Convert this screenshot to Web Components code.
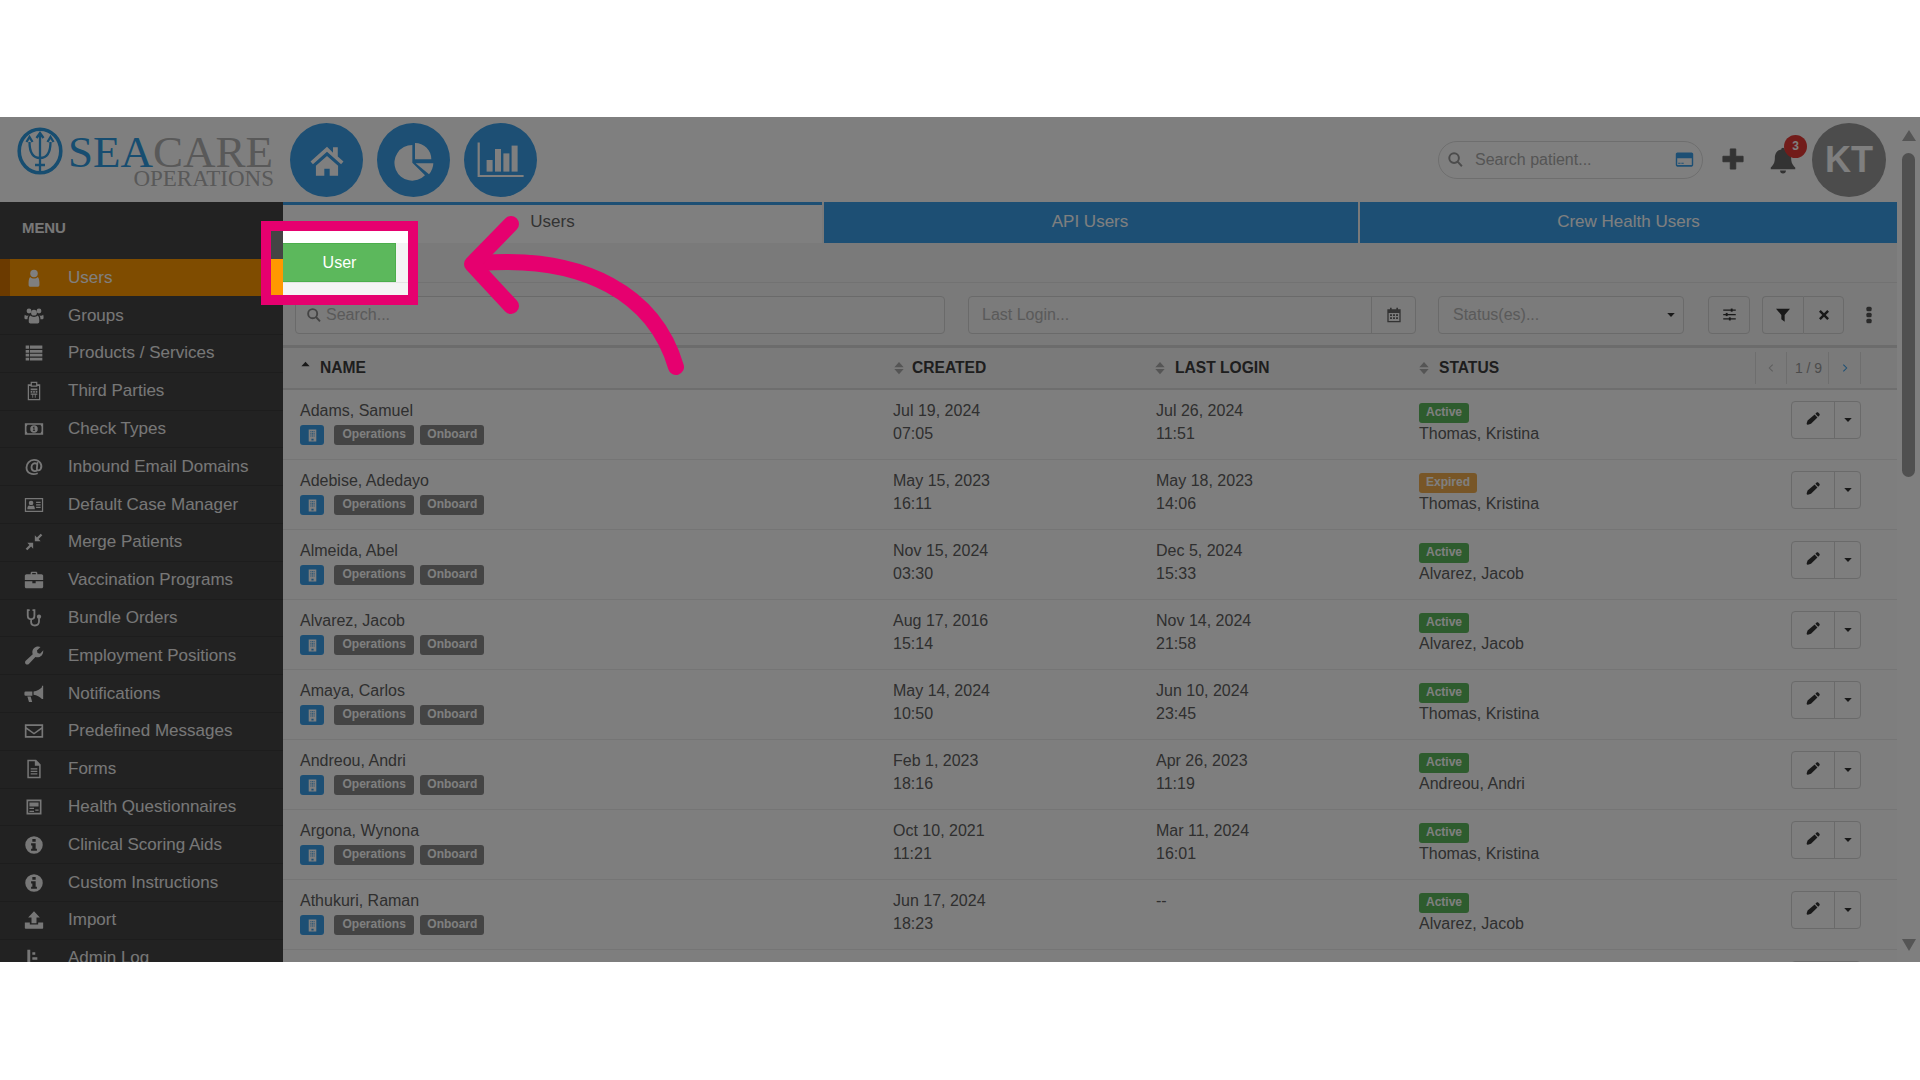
<!DOCTYPE html>
<html>
<head>
<meta charset="utf-8">
<title>SeaCare Operations - Users</title>
<style>
  html, body { margin: 0; padding: 0; background: #fff; }
  body { font-family: "Liberation Sans", Arial, sans-serif; color: #666; overflow: hidden; }
</style>
</head>
<body>
<sc-app>
  <sc-header slot="header"></sc-header>
  <sc-sidebar slot="sidebar">
    <sc-nav-item icon="user" active>Users</sc-nav-item>
    <sc-nav-item icon="users">Groups</sc-nav-item>
    <sc-nav-item icon="list">Products / Services</sc-nav-item>
    <sc-nav-item icon="hospital">Third Parties</sc-nav-item>
    <sc-nav-item icon="money">Check Types</sc-nav-item>
    <sc-nav-item icon="at">Inbound Email Domains</sc-nav-item>
    <sc-nav-item icon="idcard">Default Case Manager</sc-nav-item>
    <sc-nav-item icon="compress">Merge Patients</sc-nav-item>
    <sc-nav-item icon="briefcase">Vaccination Programs</sc-nav-item>
    <sc-nav-item icon="stethoscope">Bundle Orders</sc-nav-item>
    <sc-nav-item icon="wrench">Employment Positions</sc-nav-item>
    <sc-nav-item icon="bullhorn">Notifications</sc-nav-item>
    <sc-nav-item icon="envelope">Predefined Messages</sc-nav-item>
    <sc-nav-item icon="file">Forms</sc-nav-item>
    <sc-nav-item icon="form">Health Questionnaires</sc-nav-item>
    <sc-nav-item icon="info">Clinical Scoring Aids</sc-nav-item>
    <sc-nav-item icon="info">Custom Instructions</sc-nav-item>
    <sc-nav-item icon="upload">Import</sc-nav-item>
    <sc-nav-item icon="log">Admin Log</sc-nav-item>
  </sc-sidebar>
  <sc-users-page slot="main">
    <sc-user-row name="Adams, Samuel" created="Jul 19, 2024|07:05" login="Jul 26, 2024|11:51" status="Active" by="Thomas, Kristina"></sc-user-row>
    <sc-user-row name="Adebise, Adedayo" created="May 15, 2023|16:11" login="May 18, 2023|14:06" status="Expired" by="Thomas, Kristina"></sc-user-row>
    <sc-user-row name="Almeida, Abel" created="Nov 15, 2024|03:30" login="Dec 5, 2024|15:33" status="Active" by="Alvarez, Jacob"></sc-user-row>
    <sc-user-row name="Alvarez, Jacob" created="Aug 17, 2016|15:14" login="Nov 14, 2024|21:58" status="Active" by="Alvarez, Jacob"></sc-user-row>
    <sc-user-row name="Amaya, Carlos" created="May 14, 2024|10:50" login="Jun 10, 2024|23:45" status="Active" by="Thomas, Kristina"></sc-user-row>
    <sc-user-row name="Andreou, Andri" created="Feb 1, 2023|18:16" login="Apr 26, 2023|11:19" status="Active" by="Andreou, Andri"></sc-user-row>
    <sc-user-row name="Argona, Wynona" created="Oct 10, 2021|11:21" login="Mar 11, 2024|16:01" status="Active" by="Thomas, Kristina"></sc-user-row>
    <sc-user-row name="Athukuri, Raman" created="Jun 17, 2024|18:23" login="--" status="Active" by="Alvarez, Jacob"></sc-user-row>
    <sc-user-row></sc-user-row>
  </sc-users-page>
  <sc-scrollbar slot="scroll"></sc-scrollbar>
  <sc-spotlight slot="overlay"></sc-spotlight>
</sc-app>

<script>
/**
 * icon shapes, drawn on a 24 grid
 */
const ICONS = {
  home: '<path d="M12 3.600 1.600 13l1.500 1.700L12 6.800l8.900 7.900 1.500-1.700-3.600-3.200V4h-3v3.400z"/><path d="M5 15.600 12 9.400l7 6.200V22h-5.300v-4.500h-3.400V22H5z"/>',
  pie: '<path d="M12.600 1.200A9.800 9.800 0 0 1 22.400 11H12.600z"/><path d="M13 13.400H23.600A11 11 0 0 1 21 20z"/><path d="M11 2.400V13l7.600 7.600A10.700 10.700 0 1 1 11 2.400z"/>',
  chart: '<path d="M.3 3.200h1.100v16.300h21.900v1H.3z"/><rect x="4.800" y="12" width="3" height="5.800"/><rect x="9" y="6.500" width="3" height="11.300"/><rect x="13.200" y="8.700" width="3" height="9.100"/><rect x="17.300" y="4.800" width="3" height="13"/>',
  user: '<circle cx="12" cy="6.500" r="4.500"/><path d="M7.500 10.800c1.200 1.300 2.800 1.900 4.500 1.900s3.300-.6 4.500-1.900c1.100 1 2 3.300 2 6.700v2.500c0 1.600-1 2.500-2.300 2.500H7.800c-1.300 0-2.300-.9-2.300-2.500v-2.500c0-3.400.9-5.700 2-6.700z"/>',
  users: '<circle cx="6" cy="6" r="2.900"/><circle cx="18" cy="6" r="2.900"/><circle cx="12" cy="8" r="3.500"/><path d="M1 10.500c1 1 3 1.500 4.500 1-.8 1-1.300 2.500-1.300 4.500H2.500C1.400 16 .5 15.300 .5 14c0-1.500.1-2.700.5-3.500zM23 10.500c.4.800.5 2 .5 3.500 0 1.300-.9 2-2 2h-1.700c0-2-.5-3.500-1.300-4.500 1.500.5 3.500 0 4.500-1zM7.500 11.500c1 1 2.800 1.600 4.500 1.600s3.500-.6 4.500-1.600c1.200 1 1.800 3 1.800 5.500v2c0 1.300-1 2-2 2H7.700c-1 0-2-.7-2-2v-2c0-2.500.6-4.500 1.800-5.500z"/>',
  list: '<path d="M2 3h4v4H2zM7 3h15v4H7zM2 8.500h4v3.300H2zM7 8.500h15v3.300H7zM2 13h4v3.300H2zM7 13h15v3.300H7zM2 17.700h4V21H2zM7 17.700h15V21H7z"/>',
  hospital: '<path fill-rule="evenodd" d="M8 1h8v3h3.500v19h-15V4H8zm1.500 1.500v3h5v-3zM6 6v15.500h12V6h-2v1H8V6zm2 3h8v2H8zm0 3h2v2H8zm3 0h2v2h-2zm3 0h2v2h-2zm-6 3h8v1.500h-2V20h-1v-3.500h-2V20h-1v-3.500H8z"/>',
  money: '<path fill-rule="evenodd" d="M1 5h22v14H1zm3 2a2.500 2.500 0 0 1-1 2v6a2.500 2.500 0 0 1 1 2h16a2.500 2.500 0 0 1 1-2V9a2.500 2.500 0 0 1-1-2zm8 .5a4.500 4.500 0 1 1 0 9 4.500 4.500 0 0 1 0-9zm-.5 1.500v1h-.8v1h.8v2.500h-.8v1h2.600v-1h-.8V9z"/>',
  at: '<path fill="none" stroke="currentColor" stroke-width="2.200" d="M16 15.500c-2 2.500-7 2-7-3.500 0-3.500 3.500-5.500 6-3.800l1-.7-.6 7c0 2 3 2 4.500 0 2.500-4-.2-11-7.900-11C6.500 3.500 3 8 3 12.500 3 19 9.500 22.500 16.500 19.500"/>',
  idcard: '<path fill-rule="evenodd" d="M1 3.500h22v17H1zm1.500 1.500v14h19V5zm6 1.800a2.800 2.800 0 1 1 0 5.600 2.800 2.800 0 0 1 0-5.600zM4 17c0-3 .8-4.500 2.300-4.500 1.300.8 3.100.8 4.400 0 1.500 0 2.300 1.500 2.300 4.500zm10.500-9H20v1.500h-5.500zm0 3H20v1.500h-5.500zm0 3H20v1.500h-5.500z"/>',
  compress: '<path d="M13 4v7h7l-2.500-2.500L22 4l-2-2-4.500 4.500zM11 13H4l2.500 2.500L2 20l2 2 4.500-4.500L11 20z"/>',
  briefcase: '<path fill-rule="evenodd" d="M8 5V3.500C8 2.700 8.700 2 9.500 2h5c.8 0 1.500.7 1.500 1.500V5h5c1 0 2 1 2 2v5H1V7c0-1 1-2 2-2zm1.800-1.300V5h4.400V3.700zM1 13.500h9V16h4v-2.500h9V20c0 1-1 2-2 2H3c-1 0-2-1-2-2z"/>',
  stethoscope: '<path fill="none" stroke="currentColor" stroke-width="2.200" stroke-linecap="round" d="M6 2.500H4.500v6.500c0 3 2 4.500 4 4.500s4-1.500 4-4.500V2.500H11M8.500 13.500v3c0 3 2 4.500 4.500 4.500s5-1.500 5-5v-3"/><circle cx="18" cy="10.500" r="2.600"/>',
  wrench: '<path d="M23 6.500c0 4-3 7-7 7-.8 0-1.600-.1-2.300-.4L5.800 21.500c-1 1-2.800 1-3.800 0s-1-2.800 0-3.800l8.500-7.900C10.200 9 10 8.200 10 7.500c0-4 3-7 7-7 1 0 2 .3 2.800.7L15.500 5.400l.8 3 3 .8 3.900-4z"/>',
  bullhorn: '<path d="M23 2v16h-1.500c-2.500-2.500-6-4.500-10-5v-4c4-.5 7.500-2.500 10-5V2zM2 9h8v5H2a1.500 1.500 0 0 1-1.500-1.500v-2A1.500 1.500 0 0 1 2 9zM4 15h4l1.800 6.500H6z"/>',
  envelope: '<path fill-rule="evenodd" d="M1 4h22v16H1zm2 2v1.500l9 6.500 9-6.500V6zm0 3.800V18h18V9.800L12 16.300z"/>',
  file: '<path fill-rule="evenodd" d="M4 1h10.500L20 6.500V23H4zm1.800 1.800v18.400h12.400V8h-5.200V2.800zM8 11h8v1.500H8zm0 3h8v1.500H8zm0 3h8v1.500H8z"/>',
  form: '<path fill-rule="evenodd" d="M3 3h18v18H3zm2 2v14h14V5zm1.500 1.500h11v5h-11zM6.500 13H12v1.500H6.500zm7 2h4v1.500h-4zm-7 1.500H12V18H6.500z"/>',
  info: '<path fill-rule="evenodd" d="M12 1.500a10.500 10.500 0 1 1 0 21 10.500 10.500 0 0 1 0-21zM10 4.800v3.200h4V4.800zM8.500 10v2.500H10v4H8.500V19h7v-2.500H14V10z"/>',
  upload: '<path d="M12 1.500 19 9h-4v7H9V9H5zM1 15h6v2.500h10V15h6v6.500c0 .5-.5 1-1 1H2c-.5 0-1-.5-1-1z"/>',
  log: '<path d="M4 2h3.500v19H4zM10 5h3.500v3H10zM10 11h6v3h-6zM10 17h10v4H10z"/>',
  search: '<path fill="none" stroke="currentColor" stroke-width="2.800" d="M10 3.200a6.800 6.800 0 1 1 0 13.600 6.800 6.800 0 0 1 0-13.600zM15 15l6 6.500"/>',
  card: '<path fill-rule="evenodd" d="M3 3h18c1 0 2 1 2 2v14c0 1-1 2-2 2H3c-1 0-2-1-2-2V5c0-1 1-2 2-2zm-.2 7.500V19h18.400v-8.500zM4 16h3v1.500H4zm4 0h3v1.500H8z"/>',
  plus: '<path d="M9 1h6v8h8v6h-8v8H9v-8H1V9h8z" stroke="currentColor" stroke-linejoin="round" stroke-width="1"/>',
  bell: '<path d="M12 1.500c1 0 1.500.7 1.500 1.500 4 .7 5.500 4 5.500 7.500 0 4 1.500 6 3.500 8v1.500h-21V18.500c2-2 3.500-4 3.500-8C5 7 6.500 3.700 10.500 3c0-.8.500-1.500 1.500-1.500zM9.500 21h5a2.500 2.500 0 0 1-5 0z"/>',
  sliders: '<path d="M2 4h20v2H2zM2 11h20v2H2zM2 18h20v2H2z"/><rect x="14" y="2.500" width="3" height="5"/><rect x="6" y="9.500" width="3" height="5"/><rect x="11" y="16.500" width="3" height="5"/>',
  filter: '<path d="M1.500 2.500h21L14.500 12v10l-5-3.500V12z"/>',
  times: '<path d="M5.500 2 12 8.500 18.500 2 22 5.500 15.500 12l6.500 6.500-3.500 3.500L12 15.500 5.500 22 2 18.500 8.500 12 2 5.500z"/>',
  dots: '<rect x="8.500" y="1" width="7" height="6" rx="2"/><rect x="8.500" y="9" width="7" height="6" rx="2"/><rect x="8.500" y="17" width="7" height="6" rx="2"/>',
  pencil: '<path d="M17 2.500c.7-.7 1.800-.7 2.500 0l2 2c.7.7.7 1.800 0 2.500l-2 2L15 4.500zM13.800 5.700l4.500 4.500L8 20.500 3 22l-1.500-.5L1 20l1.500-5z"/>',
  caret: '<path d="M3 7h18l-9 10z"/>',
  calendar: '<path fill-rule="evenodd" d="M6 1h2.500v2.500h7V1H18v2.500h4V23H2V3.500h4zM4 9v12h16V9zm2 2h3v2.500H6zm4.500 0h3v2.500h-3zm4.500 0h3v2.500h-3zm-9 4.500h3V18H6zm4.500 0h3V18h-3zm4.500 0h3V18h-3z"/>',
  sort: '<path d="M12 1.500l8 9H4zM4 13.500h16l-8 9z"/>',
  up: '<path d="M12 6l9 10H3z"/>',
  prev: '<path fill="none" stroke="currentColor" stroke-width="2.500" d="M16 4 8 12l8 8"/>',
  next: '<path fill="none" stroke="currentColor" stroke-width="2.500" d="M8 4l8 8-8 8"/>',
  building: '<path fill-rule="evenodd" d="M5 1h14v22H5zm3 3v2h2V4zm3 0v2h2V4zm3 0v2h2V4zM8 8v2h2V8zm3 0v2h2V8zm3 0v2h2V8zM8 12v2h2v-2zm3 0v2h2v-2zm3 0v2h2v-2zm-4 6v3h4v-3z"/>'
}

const makeTemplate = function (html) {
  const template = document.createElement('template')
  template.innerHTML = html
  return template
}

/**
 * base class, clones the template into an open shadow root
 */
class ScElement extends HTMLElement {
  render (template) {
    const root = this.attachShadow({mode: 'open'})
    root.appendChild(document.importNode(template.content, true))
    return root
  }
}

class ScIcon extends ScElement {
  connectedCallback () {
    if (this.shadowRoot) return
    const root = this.attachShadow({mode: 'open'})
    const size = this.getAttribute('size') || 16
    const shape = ICONS[this.getAttribute('name')] || ''
    root.innerHTML = `<style>
      :host{ display: inline-flex; width: ${size}px; height: ${size}px; flex: none; }
      svg{ width: 100%; height: 100%; display: block; fill: currentColor; }
    </style><svg viewBox="0 0 24 24" aria-hidden="true">${shape}</svg>`
  }
}
customElements.define('sc-icon', ScIcon)

const appTemplate = makeTemplate(`<style>
  :host{ display: block; position: relative; margin-top: 117px; width: 1920px; height: 845px; overflow: hidden; background: #fff; }
  .body{ display: flex; height: 760px; }
  .main{ flex: 1; min-width: 0; }
</style>
<slot name="header"></slot>
<div class="body">
  <slot name="sidebar"></slot>
  <div class="main"><slot name="main"></slot></div>
  <slot name="scroll"></slot>
</div>
<slot name="overlay"></slot>`)

class ScApp extends ScElement {
  constructor () {
    super()
    this.render(appTemplate)
  }
}
customElements.define('sc-app', ScApp)

const headerTemplate = makeTemplate(`<style>
  :host{ display: flex; align-items: center; height: 85px; background: #fff; font-family: "Liberation Sans", Arial, sans-serif; }
  .logo{ display: flex; width: 290px; flex: none; padding-left: 17px; box-sizing: border-box; height: 85px; }
  .emblem{ width: 46px; height: 48px; margin-top: 10px; color: #2f9be0; flex: none; }
  .word{ margin-left: 5px; margin-top: 20px; width: 206px; font-family: "Liberation Serif", "Times New Roman", serif; text-align: right; white-space: nowrap; }
  .word .big{ display: block; font-size: 45px; line-height: 30px; color: #b2b2b2; text-align: left; }
  .word .big b{ font-weight: normal; color: #2f9be0; }
  .word .small{ display: block; font-size: 23px; line-height: 16px; color: #b2b2b2; margin-top: 4px; }
  .round{ width: 73px; height: 74px; border-radius: 50%; background: #3a9fe9; color: #fff; display: flex; align-items: center; justify-content: center; margin-right: 14px; flex: none; }
  .round .pie{ margin-top: 3px; }
  .spacer{ flex: 1; }
  .search{ width: 265px; height: 38px; box-sizing: border-box; border: 1px solid #ddd; border-radius: 19px; display: flex; align-items: center; padding: 0 8px 0 8px; color: #aaa; font-size: 16px; }
  .search .q{ color: #999; margin-right: 11px; }
  .search .text{ flex: 1; color: #aaa; }
  .search .cc{ color: #3a9fe9; }
  .plus{ margin-left: 19px; margin-top: -2px; color: #666; width: 22px; height: 22px; }
  .bell{ position: relative; margin-left: 25px; color: #666; width: 28px; height: 28px; }
  .bell .badge{ position: absolute; left: 15px; top: -11px; width: 23px; height: 23px; border-radius: 50%; background: #e53935; color: #fff; font-size: 12px; font-weight: bold; text-align: center; line-height: 23px; }
  .kt{ margin-left: 15px; margin-right: 34px; width: 74px; height: 74px; border-radius: 50%; background: #999; color: #fff; font-size: 36px; font-weight: bold; text-align: center; line-height: 74px; flex: none; }
</style>
<div class="logo">
  <svg class="emblem" viewBox="0 0 46 48" fill="none" stroke="currentColor" stroke-width="3.600">
    <ellipse cx="23" cy="24" rx="20.800" ry="21.800"/>
    <path stroke-width="2.300" d="M23 7v38M12.500 15c0 11 4 16 10.500 16s10.500-5 10.500-16M9.500 15l3-5 3 5M30.500 15l3-5 3 5M19.500 11l3.500-5 3.500 5M18 38h10"/>
  </svg>
  <div class="word"><span class="big"><b>SEA</b>CARE</span><span class="small">OPERATIONS</span></div>
</div>
<div class="round"><sc-icon name="home" size="38"></sc-icon></div>
<div class="round"><sc-icon class="pie" name="pie" size="40"></sc-icon></div>
<div class="round"><sc-icon name="chart" size="48"></sc-icon></div>
<div class="spacer"></div>
<div class="search"><sc-icon class="q" name="search" size="17"></sc-icon><span class="text">Search patient...</span><sc-icon class="cc" name="card" size="19"></sc-icon></div>
<sc-icon class="plus" name="plus" size="22"></sc-icon>
<div class="bell"><sc-icon name="bell" size="28"></sc-icon><span class="badge">3</span></div>
<div class="kt">KT</div>`)

class ScHeader extends ScElement {
  constructor () {
    super()
    this.render(headerTemplate)
  }
}
customElements.define('sc-header', ScHeader)

const sidebarTemplate = makeTemplate(`<style>
  :host{ display: block; width: 283px; flex: none; background: #444; overflow: hidden; font-family: "Liberation Sans", Arial, sans-serif; }
  .title{ height: 57.400px; box-sizing: border-box; padding: 17px 0 0 22px; font-size: 15px; line-height: 18px; font-weight: bold; color: #eee; letter-spacing: -.1px; }
</style>
<div class="title">MENU</div>
<slot></slot>`)

class ScSidebar extends ScElement {
  constructor () {
    super()
    this.render(sidebarTemplate)
  }
}
customElements.define('sc-sidebar', ScSidebar)

const navItemTemplate = makeTemplate(`<style>
  :host{ display: flex; align-items: center; height: 37.800px; box-sizing: border-box; border-bottom: 1px solid #3a3a3a; color: #eee; font-size: 17px; }
  :host([active]){ background: #ff9800; color: #fff; border-left: 10px solid #d67400; border-bottom: 0; height: 37px; margin-bottom: .8px; }
  .icon{ width: 68px; flex: none; display: flex; justify-content: center; }
  :host([active]) .icon{ width: 58px; }
  :host([active]) .icon sc-icon{ margin-right: 10px; }
</style>
<span class="icon"></span><slot></slot>`)

class ScNavItem extends ScElement {
  constructor () {
    super()
    const root = this.render(navItemTemplate)
    const icon = document.createElement('sc-icon')
    icon.setAttribute('name', this.getAttribute('icon'))
    icon.setAttribute('size', '20')
    root.querySelector('.icon').appendChild(icon)
  }
}
customElements.define('sc-nav-item', ScNavItem)

const pageTemplate = makeTemplate(`<style>
  :host{ display: block; background: #f4f4f4; font-family: "Liberation Sans", Arial, sans-serif; color: #666; height: 760px; overflow: hidden; }
  .tabs{ display: flex; height: 41px; gap: 2px; }
  .tab{ display: flex; align-items: center; justify-content: center; background: #3a9fe9; color: #fff; font-size: 17px; padding-bottom: 1px; box-sizing: border-box; }
  .tab.on{ width: 539px; background: #fff; color: #666; border-top: 3px solid #3a9fe9; padding-bottom: 4px; }
  .tab.api{ width: 534px; padding-right: 2px; }
  .tab.crew{ flex: 1; }
  .bar{ height: 39px; border-bottom: 1px solid #e4e4e4; }
  .btn{ display: flex; align-items: center; justify-content: center; width: 113px; height: 39px; box-sizing: border-box; background: #5cb85c; border: 1px solid #4cae4c; border-left: 0; color: #fff; font-size: 16px; padding-left: 1px; }
  .filters{ display: flex; align-items: center; height: 65px; box-sizing: border-box; padding: 1px 0 0 12px; border-bottom: 3px solid #d8d8d8; }
  .input{ display: flex; align-items: center; height: 38px; box-sizing: border-box; border: 1px solid #d4d4d4; border-radius: 4px; font-size: 16px; color: #b4b4b4; background: #f6f6f6; }
  .input.search{ width: 650px; padding-left: 10px; gap: 4px; margin-right: 23px; }
  .input.search sc-icon{ color: #888; }
  .input.login{ width: 448px; padding-left: 13px; margin-right: 22px; }
  .input.login .grow, .input.status .grow{ flex: 1; }
  .input.login .cal{ width: 43px; height: 100%; border-left: 1px solid #d4d4d4; display: flex; align-items: center; justify-content: center; color: #666; }
  .input.status{ width: 246px; padding: 0 7px 0 14px; margin-right: 24px; }
  .input.status sc-icon{ color: #333; }
  .tool{ display: flex; align-items: center; justify-content: center; height: 38px; width: 42px; box-sizing: border-box; border: 1px solid #d4d4d4; border-radius: 4px; color: #333; }
  .group{ display: flex; margin-left: 12px; margin-right: 16px; }
  .group .tool{ width: 41px; border-radius: 0; }
  .group .tool:first-child{ border-radius: 4px 0 0 4px; border-right: 0; }
  .group .tool:last-child{ border-radius: 0 4px 4px 0; }
  .kebab{ color: #555; }
  .head{ display: grid; grid-template-columns: 610px 263px 262px 1fr; align-items: center; height: 41.500px; box-sizing: border-box; border-bottom: 2px solid #ddd; font-size: 15.600px; font-weight: bold; color: #3c3c3c; }
  .cell{ display: flex; align-items: center; }
  .cell.first{ padding-left: 17px; }
  .cell.first sc-icon{ margin: -7px 9px 0 0; color: #333; }
  .cell sc-icon{ color: #aaa; margin-left: -1px; margin-right: 6px; }
  .cell.log sc-icon{ margin-left: -3px; margin-right: 8px; }
  .cell.st sc-icon{ margin-left: -1px; margin-right: 8px; }
  .pager{ display: flex; justify-content: flex-end; margin-right: 36px; height: 32px; font-weight: normal; color: #999; }
  .pager span{ display: flex; align-items: center; justify-content: center; border-left: 1px solid #ddd; font-size: 14px; box-sizing: border-box; }
  .pager .prev{ width: 31px; color: #bbb; }
  .pager .mid{ width: 42px; padding-left: 2px; }
  .pager .next{ width: 33px; border-right: 1px solid #ddd; color: #3a9fe9; }
</style>
<div class="tabs">
  <div class="tab on">Users</div>
  <div class="tab api">API Users</div>
  <div class="tab crew">Crew Health Users</div>
</div>
<div class="bar"><div class="btn">User</div></div>
<div class="filters">
  <div class="input search"><sc-icon name="search" size="16"></sc-icon>Search...</div>
  <div class="input login"><span class="grow">Last Login...</span><span class="cal"><sc-icon name="calendar" size="16"></sc-icon></span></div>
  <div class="input status"><span class="grow">Status(es)...</span><sc-icon name="caret" size="10"></sc-icon></div>
  <div class="tool"><sc-icon name="sliders" size="15"></sc-icon></div>
  <div class="group"><div class="tool"><sc-icon name="filter" size="16"></sc-icon></div><div class="tool"><sc-icon name="times" size="12"></sc-icon></div></div>
  <sc-icon class="kebab" name="dots" size="18"></sc-icon>
</div>
<div class="head">
  <div class="cell first"><sc-icon name="up" size="11"></sc-icon>NAME</div>
  <div class="cell"><sc-icon name="sort" size="14"></sc-icon>CREATED</div>
  <div class="cell log"><sc-icon name="sort" size="14"></sc-icon>LAST LOGIN</div>
  <div class="cell" style="justify-content: space-between">
    <span class="cell st"><sc-icon name="sort" size="14"></sc-icon>STATUS</span>
    <div class="pager"><span class="prev"><sc-icon name="prev" size="10" style="margin:0;color:#bbb"></sc-icon></span><span class="mid">1 / 9</span><span class="next"><sc-icon name="next" size="10" style="margin:0;color:#3a9fe9"></sc-icon></span></div>
  </div>
</div>
<slot></slot>`)

class ScUsersPage extends ScElement {
  constructor () {
    super()
    this.render(pageTemplate)
  }
}
customElements.define('sc-users-page', ScUsersPage)

const rowTemplate = makeTemplate(`<style>
  :host{ display: grid; grid-template-columns: 610px 263px 262px 1fr; height: 70.050px; box-sizing: border-box; border-bottom: 1px solid #eaeaea; background: #fcfcfc; font-size: 16px; line-height: 23px; color: #5e5e5e; }
  .col{ padding-top: 9px; white-space: nowrap; }
  .name{ padding-left: 17px; }
  .tags{ display: flex; align-items: center; margin-top: 3.500px; height: 20px; }
  .tag{ display: flex; align-items: center; justify-content: center; height: 20px; border-radius: 3px; background: #888; color: #fff; font-size: 12px; font-weight: bold; line-height: 20px; padding: 0 8.500px 2px; box-sizing: border-box; margin-left: 6px; }
  .tag.site{ width: 24px; padding: 0; margin: 0 4px 0 0; background: #3a9fe9; }
  .tag.onboard{ padding: 0 7px 2px; }
  .stat{ padding-top: 13px; line-height: 22px; }
  .badge{ display: block; width: max-content; height: 20px; margin-left: 1px; border-radius: 3px; color: #fff; font-size: 12px; font-weight: bold; line-height: 18px; padding: 0 7px; box-sizing: border-box; }
  .badge.Active{ background: #5cb85c; }
  .badge.Expired{ background: #f0ad4e; }
  .who-by{ margin-left: 1px; }
  .actions{ position: relative; }
  .split{ display: flex; position: absolute; top: 11px; left: 373px; width: 70px; height: 38px; box-sizing: border-box; border: 1px solid #d4d4d4; border-radius: 4px; color: #333; }
  .split div{ display: flex; align-items: center; justify-content: center; }
  .split .edit{ width: 42px; border-right: 1px solid #d4d4d4; padding-bottom: 2px; }
  .split .more{ flex: 1; }
</style>
<div class="col name"><div class="who"></div><div class="tags"></div></div>
<div class="col created"></div>
<div class="col login"></div>
<div class="actions stat"><div class="st"></div><div class="split"><div class="edit"><sc-icon name="pencil" size="15"></sc-icon></div><div class="more"><sc-icon name="caret" size="10"></sc-icon></div></div></div>`)

class ScUserRow extends ScElement {
  constructor () {
    super()
    const root = this.render(rowTemplate)
    const name = this.getAttribute('name')
    if (!name) return
    root.querySelector('.who').textContent = name
    root.querySelector('.tags').innerHTML = '<span class="tag site"><sc-icon name="building" size="13"></sc-icon></span><span class="tag">Operations</span><span class="tag onboard">Onboard</span>'
    root.querySelector('.created').innerHTML = this.getAttribute('created').split('|').join('<br>')
    root.querySelector('.login').innerHTML = this.getAttribute('login').split('|').join('<br>')
    const status = this.getAttribute('status')
    root.querySelector('.st').innerHTML = `<span class="badge ${status}">${status}</span><div class="who-by">${this.getAttribute('by')}</div>`
  }
}
customElements.define('sc-user-row', ScUserRow)

const scrollTemplate = makeTemplate(`<style>
  :host{ display: flex; flex-direction: column; align-items: center; width: 23px; flex: none; background: #fff; }
  .up{ width: 0; height: 0; border: 7.500px solid transparent; border-top: 0; border-bottom: 11px solid #aaa; margin-top: -72px; }
  .thumb{ width: 13px; height: 324px; border-radius: 7px; background: #a0a0a0; margin-top: 12px; }
  .down{ width: 0; height: 0; border: 7.500px solid transparent; border-bottom: 0; border-top: 12px solid #aaa; margin-top: auto; margin-bottom: 11px; }
</style>
<div class="up"></div><div class="thumb"></div><div class="down"></div>`)

class ScScrollbar extends ScElement {
  constructor () {
    super()
    this.render(scrollTemplate)
  }
}
customElements.define('sc-scrollbar', ScScrollbar)

const spotlightTemplate = makeTemplate(`<style>
  :host{ display: block; position: absolute; inset: 0; pointer-events: none; }
  .frame{ position: absolute; left: 261px; top: 104px; width: 137px; height: 64px; border: 10px solid #e6006f; box-shadow: 0 0 0 3000px rgba(0,0,0,.5); }
  svg{ position: absolute; left: 0; top: 0; }
</style>
<div class="frame"></div>
<svg width="1920" height="845" viewBox="0 0 1920 845" fill="none" stroke="#e6006f" stroke-width="16" stroke-linecap="round" stroke-linejoin="round">
  <path d="M676 250C655 178 585 138 480 146"/>
  <path d="M511 107 472 147 511 189"/>
</svg>`)

class ScSpotlight extends ScElement {
  constructor () {
    super()
    this.render(spotlightTemplate)
  }
}
customElements.define('sc-spotlight', ScSpotlight)
</script>
</body>
</html>
